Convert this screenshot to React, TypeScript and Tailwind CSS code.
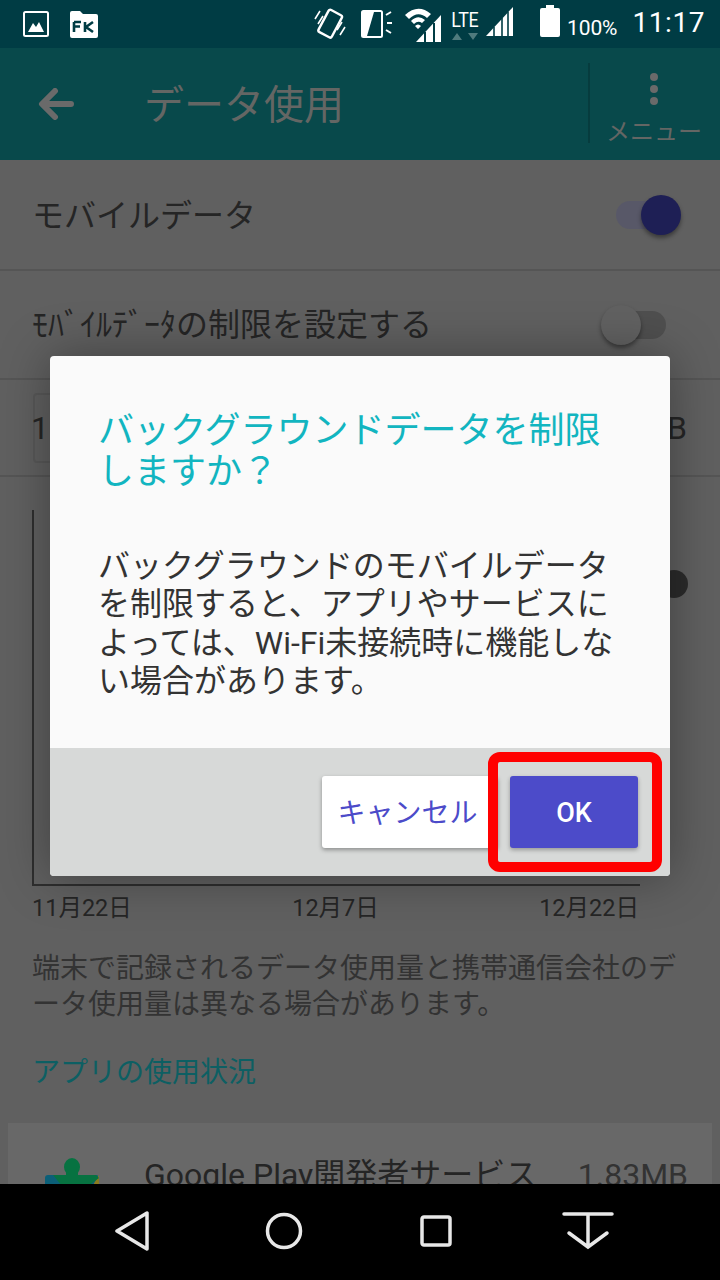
import React from "react";

const font = { fontFamily: '"Roboto", "Noto Sans CJK JP", sans-serif' };

function StatusBar() {
  return (
    <div className="flex h-12 shrink-0 items-center bg-[#003c44] text-white">
      <svg width="26" height="26" viewBox="0 0 26 26" className="ml-[23px]">
        <rect x="1" y="1" width="24" height="24" rx="1.5" fill="none" stroke="white" strokeWidth="2" />
        <path d="M5 21 L10 12 L13 16 L16 11 L21 21 Z" fill="white" />
      </svg>
      <svg width="28" height="27" viewBox="0 0 28 27" className="ml-[21px]">
        <path d="M0 2 Q0 0 2 0 L10 0 L13 3 L26 3 Q28 3 28 5 L28 25 Q28 27 26 27 L2 27 Q0 27 0 25 Z" fill="white" />
        <path d="M4 11 H11 M4 11 V21 M4 15.500 H10 M23 11 L16 16 L23 21 M15 11 V21" stroke="#003c44" strokeWidth="2.600" fill="none" />
      </svg>
      <svg width="32" height="32" viewBox="0 0 32 32" className="ml-[216px] mt-[-3px]">
        <rect x="9" y="4" width="15" height="25" rx="2" transform="rotate(28 16 16)" fill="none" stroke="white" strokeWidth="2.400" />
        <path d="M1 12 L6 4 M4 17 L9 9 M31 20 L26 28 M28 15 L23 23" stroke="white" strokeWidth="1.600" />
      </svg>
      <svg width="32" height="32" viewBox="0 0 32 32" className="ml-[15px]">
        <rect x="1" y="3" width="20" height="26" rx="1.500" fill="none" stroke="white" strokeWidth="2" />
        <path d="M2 28 L2 4 L13 4 L6 28 Z" fill="white" />
        <path d="M25 7 L30 4 M26 15 H31 M25 22 L30 25" stroke="white" strokeWidth="2" />
      </svg>
      <svg width="38" height="38" viewBox="0 0 38 38" className="ml-[11px] mt-[2px]">
        <path d="M1 9 Q14 -3 27 8 L23 12 Q14 4 5 13 Z M7 15 Q14 8 21 14 L18 17 Q14 14 10 18 Z M11 20 Q14 17 17 20 L14 23 Z" fill="white" />
        <path d="M12 36 L37 9 V36 Z" fill="white" />
        <path d="M21 36 V26 M30 36 V17" stroke="#003c44" strokeWidth="2" />
      </svg>
      <div className="ml-[8px] flex w-[30px] flex-col items-center">
        <span className="text-[21px] leading-[24px] font-normal tracking-[-0.5px] [transform:scaleX(0.85)]">LTE</span>
        <svg width="28" height="9" viewBox="0 0 28 9">
          <path d="M1 8 L6 1 L11 8 Z M17 1 H27 L22 8 Z" fill="#4f7a7d" />
        </svg>
      </div>
      <svg width="29" height="30" viewBox="0 0 29 30" className="ml-[5px] mt-[-4px]">
        <path d="M1 29 L28 0 V29 Z" fill="white" />
        <path d="M9 29 V20 M17 29 V11 M23 29 V5" stroke="#003c44" strokeWidth="1.600" />
      </svg>
      <svg width="20" height="32" viewBox="0 0 20 32" className="ml-[26px] mt-[-7px]">
        <path d="M6 0 H14 V3 H18 Q20 3 20 5 V30 Q20 32 18 32 H2 Q0 32 0 30 V5 Q0 3 2 3 H6 Z" fill="white" />
      </svg>
      <span className="ml-[7px] mt-[8px] text-[21px] leading-none tracking-[-0.1px]">100%</span>
      <span className="ml-[15px] mt-[-2px] text-[28px] leading-none tracking-[0.6px]">11:17</span>
    </div>
  );
}

function AppBar() {
  return (
    <div className="z-10 flex h-[112px] shrink-0 items-center bg-[#08494b] text-[#646664]">
      <svg width="36" height="32" viewBox="0 0 36 32" className="ml-[38px]">
        <path d="M33 16 H5 M17 3 L4 16 L17 29" fill="none" stroke="#6a6a6a" strokeWidth="6" strokeLinecap="round" strokeLinejoin="round" />
      </svg>
      <h1 className="ml-[70px] mt-[3px] text-[40px] leading-none font-normal">データ使用</h1>
      <div className="ml-auto mt-[-2px] flex h-20 w-[132px] flex-col items-center border-l-2 border-[#063c3e] pr-[2px] pt-[10px]">
        <div className="flex flex-col gap-[4px]">
          <span className="h-2 w-2 rounded-full bg-[#6a6a6a]" />
          <span className="h-2 w-2 rounded-full bg-[#6a6a6a]" />
          <span className="h-2 w-2 rounded-full bg-[#6a6a6a]" />
        </div>
        <span className="mt-[13px] text-[24px] leading-[28px] text-[#646664]">メニュー</span>
      </div>
    </div>
  );
}

function Settings() {
  return (
    <div className="min-h-0 flex-1 overflow-hidden bg-[#606060] text-[#252525]">
      <div className="flex h-[111px] items-center justify-between border-b-2 border-[#555555] pl-[32px] pr-[48px]">
        <span className="mt-[2px] text-[32px] leading-none">モバイルデータ</span>
        <div className="relative h-7 w-[56px] rounded-full bg-[#585868]">
          <span className="absolute right-[-9px] top-[-6px] h-10 w-10 rounded-full bg-[#1e1f55] shadow-[0_3px_4px_rgba(0,0,0,0.4)]" />
        </div>
      </div>
      <div className="flex h-[109px] items-center justify-between border-b-2 border-[#555555] pl-[32px] pr-[54px]">
        <span className="mt-[1px] text-[32px] leading-none">ﾓﾊﾞｲﾙﾃﾞｰﾀの制限を設定する</span>
        <div className="relative h-7 w-[52px] rounded-full bg-[#4f4f4f]">
          <span className="absolute left-[-13px] top-[-6px] h-10 w-10 rounded-full bg-[#616161] shadow-[0_3px_4px_rgba(0,0,0,0.4)]" />
        </div>
      </div>
      <div className="flex h-[97px] items-center justify-between border-b-2 border-[#555555] pl-[33px] pr-[33px] text-[32px]">
        <div className="flex h-[70px] w-[120px] items-center rounded-sm border-2 border-[#585858]">
          <span className="ml-[-4px]">1</span>
        </div>
        <span>MB</span>
      </div>
      <div className="relative ml-[32px] mt-[33px] h-[376px] w-[608px] border-b-2 border-l-2 border-[#2e2e2e]">
        <span className="absolute right-[-48px] top-[60px] h-7 w-7 rounded-full bg-[#2b2b2b]" />
      </div>
      <div className="ml-[32px] mt-[6px] flex w-[607px] justify-between text-[23.500px] leading-[32px]">
        <span>11月22日</span>
        <span>12月7日</span>
        <span>12月22日</span>
      </div>
      <p className="mx-[32px] mt-[27px] text-[28px] leading-[36px] text-[#333333]">
        端末で記録されるデータ使用量と携帯通信会社のデータ使用量は異なる場合があります。
      </p>
      <p className="mx-[32px] mt-[32px] text-[28px] leading-[36px] text-[#0d5f63]">アプリの使用状況</p>
      <div className="mx-2 mt-[32px] flex h-[140px] items-start bg-[#686868] pt-[30px]">
        <svg width="54" height="62" viewBox="0 0 54 62" className="ml-[37px] mt-[5px] shrink-0">
          <rect x="0" y="17" width="54" height="45" rx="3" fill="#0b5f78" />
          <path d="M54 17 V62 H27 Z" fill="#8a7a20" />
          <path d="M3 17 H51 L54 20 L27 40 L8 17 Z" fill="#077241" />
          <ellipse cx="27" cy="9" rx="8" ry="9" fill="#077241" />
          <rect x="21" y="12" width="12" height="8" fill="#077241" />
        </svg>
        <span className="ml-[45px] text-[32px] leading-[44px] whitespace-nowrap">Google Play開発者サービス</span>
        <span className="ml-auto mr-[24px] text-[32px] leading-[44px] text-[#333333]">1.83MB</span>
      </div>
    </div>
  );
}

function NavBar() {
  return (
    <div className="flex h-24 shrink-0 items-center bg-black pb-[2px]">
      <svg width="36" height="40" viewBox="0 0 36 40" className="ml-[114px]">
        <path d="M33 2 V38 L3 20 Z" fill="none" stroke="#e8e8e8" strokeWidth="3.500" strokeLinejoin="round" />
      </svg>
      <svg width="38" height="38" viewBox="0 0 38 38" className="ml-[115px]">
        <ellipse cx="19" cy="19" rx="16.500" ry="16.500" fill="none" stroke="#e8e8e8" strokeWidth="3.500" />
      </svg>
      <svg width="32" height="32" viewBox="0 0 32 32" className="ml-[117px]">
        <rect x="2" y="2" width="28" height="28" rx="2" fill="none" stroke="#e8e8e8" strokeWidth="3.500" />
      </svg>
      <svg width="52" height="38" viewBox="0 0 52 38" className="ml-[110px]">
        <path d="M2 2 H50 M26 4 V35 M7 21 L26 35 L45 21" fill="none" stroke="#e8e8e8" strokeWidth="3.500" strokeLinecap="round" />
      </svg>
    </div>
  );
}

function Dialog() {
  return (
    <div className="absolute left-[50px] top-[356px] flex h-[520px] w-[620px] flex-col overflow-hidden rounded-[4px] bg-[#fafafa] shadow-[0_0_50px_rgba(0,0,0,0.35)]">
      <div className="flex-1 pl-[48px] pr-[50px] pt-[55px]">
        <h2 className="text-[36px] leading-[41px] font-normal text-[#12b5c0]">
          バックグラウンドデータを制限しますか？
        </h2>
        <p className="mt-[54px] text-[32px] leading-[38.300px] text-[#333333]">
          バックグラウンドのモバイルデータを制限すると、アプリやサービスによっては、Wi-Fi未接続時に機能しない場合があります。
        </p>
      </div>
      <div className="flex h-[128px] shrink-0 items-start justify-end gap-[12px] bg-[#d7d9d8] pt-[28px] pr-[32px]">
        <button type="button" className="h-[72px] w-[176px] rounded-[3px] bg-white pt-[3px] pr-[5px] text-[28px] text-[#4c4bc9] shadow-[0_2px_4px_rgba(0,0,0,0.35)]">
          キャンセル
        </button>
        <button type="button" className="h-[72px] w-[128px] rounded-[3px] bg-[#4c4bc9] pt-[3px] text-[27px] font-medium text-white shadow-[0_2px_4px_rgba(0,0,0,0.3)]">
          OK
        </button>
      </div>
    </div>
  );
}

export default function App() {
  return (
    <div className="relative flex h-[1280px] w-[720px] flex-col overflow-hidden" style={font}>
      <StatusBar />
      <AppBar />
      <Settings />
      <NavBar />
      <Dialog />
      {/* red highlight round the OK button */}
      <div className="absolute left-[488px] top-[752px] h-[120px] w-[174px] rounded-[12px] border-[10px] border-[#ff0000]" />
    </div>
  );
}
